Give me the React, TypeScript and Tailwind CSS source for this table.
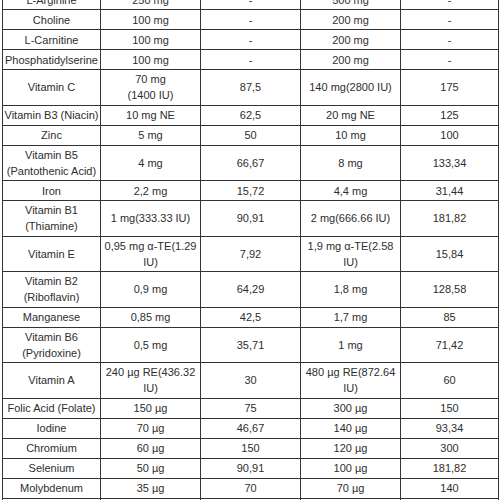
import React from "react";

type Row = [React.ReactNode, React.ReactNode, string, React.ReactNode, string];

const ROWS: Row[] = [
  ["L-Arginine", "250 mg", "-", "500 mg", "-"],
  ["Choline", "100 mg", "-", "200 mg", "-"],
  ["L-Carnitine", "100 mg", "-", "200 mg", "-"],
  ["Phosphatidylserine", "100 mg", "-", "200 mg", "-"],
  [
    "Vitamin C",
    <>
      70 mg
      <br />
      (1400 IU)
    </>,
    "87,5",
    "140 mg(2800 IU)",
    "175",
  ],
  ["Vitamin B3 (Niacin)", "10 mg NE", "62,5", "20 mg NE", "125"],
  ["Zinc", "5 mg", "50", "10 mg", "100"],
  ["Vitamin B5 (Pantothenic Acid)", "4 mg", "66,67", "8 mg", "133,34"],
  ["Iron", "2,2 mg", "15,72", "4,4 mg", "31,44"],
  ["Vitamin B1 (Thiamine)", "1 mg(333.33 IU)", "90,91", "2 mg(666.66 IU)", "181,82"],
  ["Vitamin E", "0,95 mg α-TE(1.29 IU)", "7,92", "1,9 mg α-TE(2.58 IU)", "15,84"],
  ["Vitamin B2 (Riboflavin)", "0,9 mg", "64,29", "1,8 mg", "128,58"],
  ["Manganese", "0,85 mg", "42,5", "1,7 mg", "85"],
  ["Vitamin B6 (Pyridoxine)", "0,5 mg", "35,71", "1 mg", "71,42"],
  ["Vitamin A", "240 µg RE(436.32 IU)", "30", "480 µg RE(872.64 IU)", "60"],
  ["Folic Acid (Folate)", "150 µg", "75", "300 µg", "150"],
  ["Iodine", "70 µg", "46,67", "140 µg", "93,34"],
  ["Chromium", "60 µg", "150", "120 µg", "300"],
  ["Selenium", "50 µg", "90,91", "100 µg", "181,82"],
  ["Molybdenum", "35 µg", "70", "70 µg", "140"],
  ["Vitamin D3", "5 µg", "100", "10 µg", "200"],
  ["Vitamin B12", "2 µg", "80", "4 µg", "160"],
];

export default function App() {
  return (
    <div className="h-[500px] w-[500px] overflow-hidden bg-white">
      <table
        className="ml-[2px] -mt-[11px] w-[496px] table-fixed border-collapse text-center text-[11px] leading-[16px] text-[#2e2e2e]"
        style={{ fontFamily: '"Liberation Sans", Arial, sans-serif' }}
      >
        <colgroup>
          <col className="w-[98px]" />
          <col className="w-[100px]" />
          <col className="w-[100px]" />
          <col className="w-[100px]" />
          <col className="w-[98px]" />
        </colgroup>
        <tbody>
          {ROWS.map((row, i) => (
            <tr key={i} className="h-[20px]">
              {row.map((cell, j) => (
                <td
                  key={j}
                  className="border border-[#333] px-[1px] py-[1.25px] align-middle"
                >
                  {cell}
                </td>
              ))}
            </tr>
          ))}
        </tbody>
      </table>
    </div>
  );
}
